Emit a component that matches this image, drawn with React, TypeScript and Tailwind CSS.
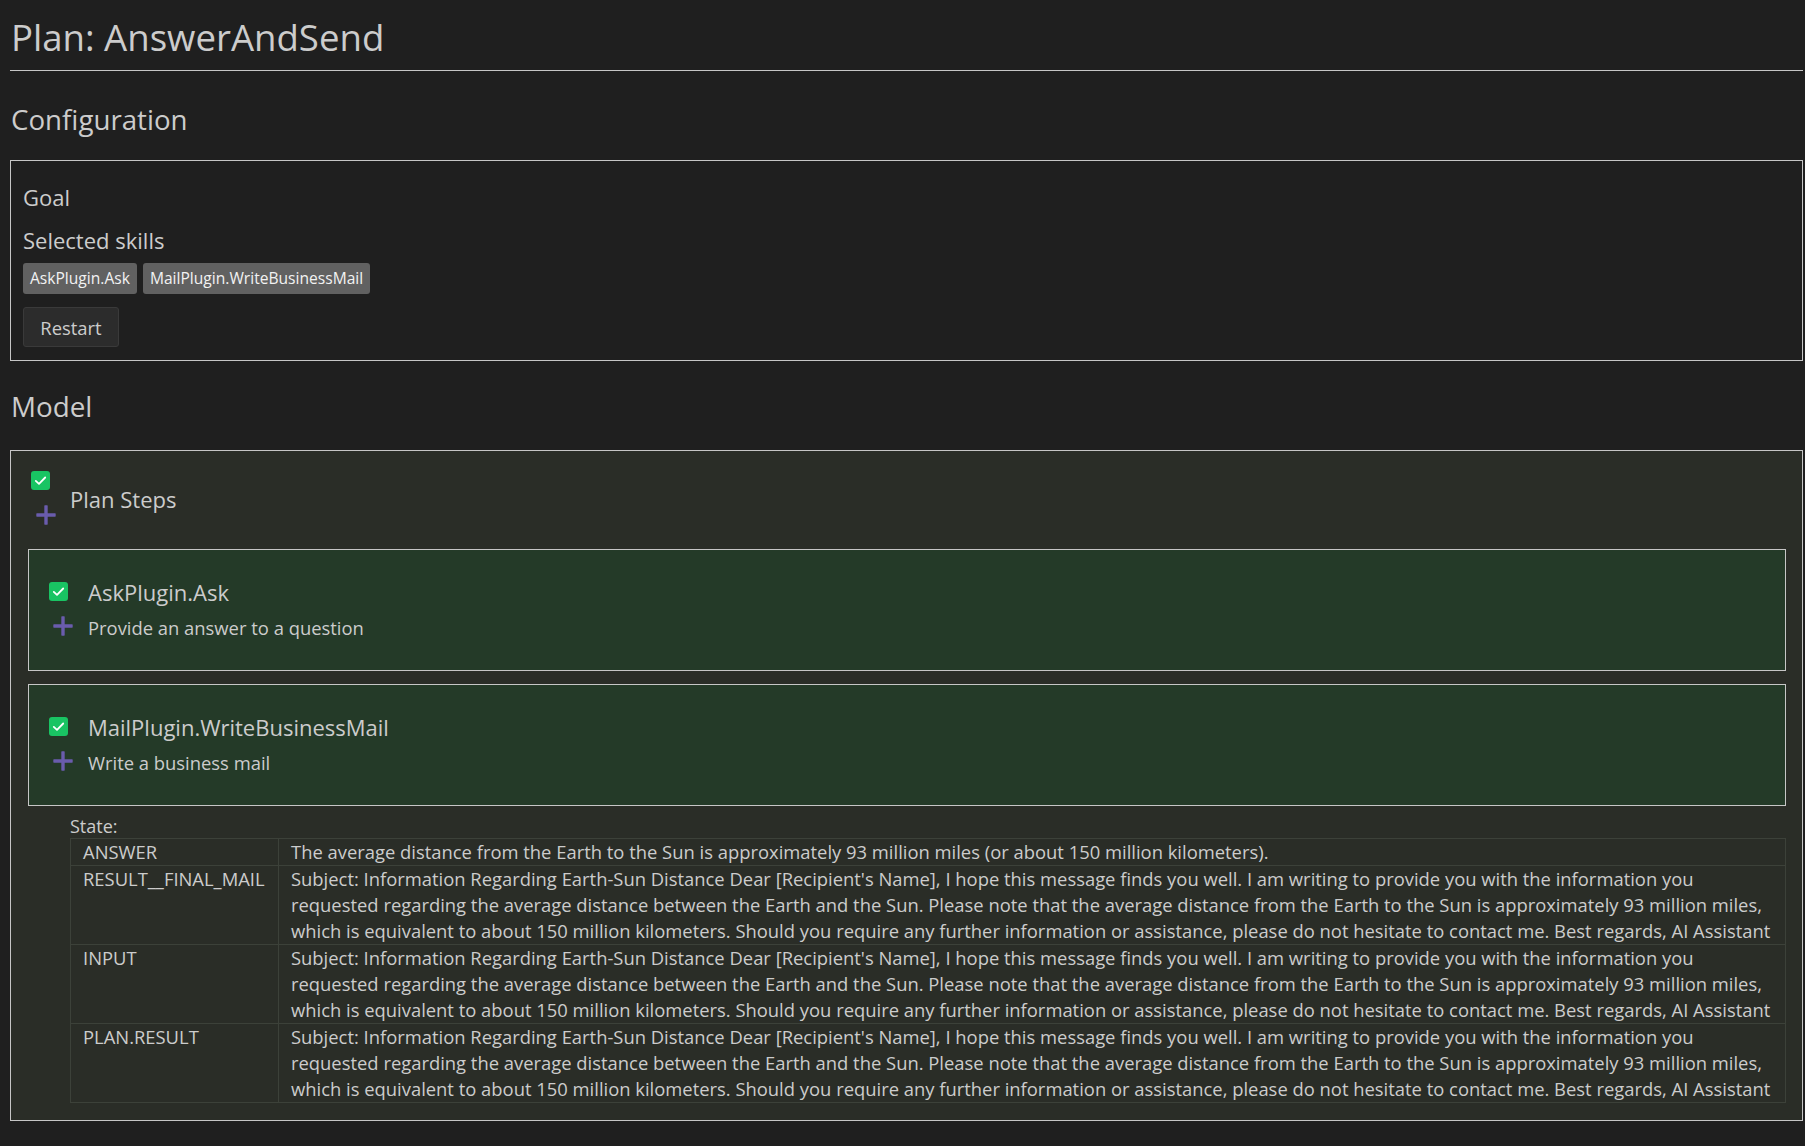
import React from "react";

const Check = () => (
  <svg width="19" height="19" viewBox="0 0 19 19" className="block shrink-0">
    <rect x="0" y="0" width="19" height="19" rx="3" fill="#19c463" />
    <path d="M4.8 9.9 L8 12.9 L14.2 6.5" stroke="#ffffff" strokeWidth="1.8" fill="none" strokeLinecap="round" strokeLinejoin="round" />
  </svg>
);

const Plus = () => (
  <svg width="20" height="20" viewBox="0 0 20 20" className="block shrink-0">
    <rect x="0.3" y="8.3" width="19.4" height="3.4" rx="0.6" fill="#6a5cad" />
    <rect x="8.3" y="0.3" width="3.4" height="19.4" rx="0.6" fill="#6a5cad" />
  </svg>
);

const Step = ({ name, desc }: { name: string; desc: string }) => (
  <div className="h-[122px] ml-[17px] mr-[16px] border border-[#c6c6c6] bg-[#243a28] pt-[29px] pl-[20px]">
    <div className="flex h-[26px] items-start">
      <div className="w-[39px] pt-[3px]">
        <Check />
      </div>
      <span className="text-[22px] leading-[26px] whitespace-nowrap">{name}</span>
    </div>
    <div className="flex mt-[11px] items-start">
      <div className="w-[39px] pl-[4px]">
        <Plus />
      </div>
      <span className="text-[18.4px] leading-[24px] whitespace-nowrap">{desc}</span>
    </div>
  </div>
);

const mailLines = [
  "Subject: Information Regarding Earth-Sun Distance Dear [Recipient's Name], I hope this message finds you well. I am writing to provide you with the information you ",
  "requested regarding the average distance between the Earth and the Sun. Please note that the average distance from the Earth to the Sun is approximately 93 million miles, ",
  "which is equivalent to about 150 million kilometers. Should you require any further information or assistance, please do not hesitate to contact me. Best regards, AI Assistant",
];

const rows: { key: string; lines: string[] }[] = [
  {
    key: "ANSWER",
    lines: [
      "The average distance from the Earth to the Sun is approximately 93 million miles (or about 150 million kilometers).",
    ],
  },
  { key: "RESULT__FINAL_MAIL", lines: mailLines },
  { key: "INPUT", lines: mailLines },
  { key: "PLAN.RESULT", lines: mailLines },
];

export default function App() {
  return (
    <div className="min-h-screen bg-[#1f1f1f] pl-[10px] pr-[2px] pb-[26px] text-[#cccccc] font-['Open_Sans',sans-serif] overflow-hidden">
      <h1 className="pt-[12.5px] pb-[9.5px] text-[36.6px] leading-[48px] border-b border-[#c6c6c6] pl-[1px]">
        Plan: AnswerAndSend
      </h1>

      <h2 className="mt-[30px] text-[27.7px] leading-[36px] pl-[1px]">Configuration</h2>

      <div className="mt-[23px] border border-[#c6c6c6] pl-[12px] pt-[22px] pb-[13px]">
        <div className="text-[22px] leading-[28px]">Goal</div>
        <div className="mt-[15px] text-[22px] leading-[28px]">Selected skills</div>
        <div className="mt-[9px] flex gap-[6px]">
          <span className="h-[31px] px-[7px] rounded-[3px] bg-[#616161] text-[#f2f2f2] text-[15.6px] flex items-center whitespace-nowrap">
            AskPlugin.Ask
          </span>
          <span className="h-[31px] px-[7px] rounded-[3px] bg-[#616161] text-[#f2f2f2] text-[15.6px] flex items-center whitespace-nowrap">
            MailPlugin.WriteBusinessMail
          </span>
        </div>
        <button className="mt-[13px] w-[96px] h-[40px] border border-[#3a3a3a] bg-[#2c2c2c] rounded-[3px] text-[18.4px] text-[#cccccc] flex items-center justify-center pt-[1px]">
          Restart
        </button>
      </div>

      <h2 className="mt-[27px] text-[27.8px] leading-[36px] pl-[1px]">Model</h2>

      <div className="mt-[26px] border border-[#c6c6c6] bg-[#2a2d27] pb-[17px]">
        <div className="h-[98px] pt-[20px] pl-[20px] flex items-start">
          <div className="w-[39px] flex flex-col">
            <Check />
            <div className="ml-[5px] mt-[15px]">
              <Plus />
            </div>
          </div>
          <div className="mt-[14px] text-[22px] leading-[28px]">Plan Steps</div>
        </div>

        <Step name="AskPlugin.Ask" desc="Provide an answer to a question" />
        <div className="h-[13px]" />
        <Step name="MailPlugin.WriteBusinessMail" desc="Write a business mail" />

        <div className="mt-[9px] ml-[59px] text-[18px] leading-[23px]">State:</div>
        <div className="ml-[59px] mr-[16px]">
          <table className="w-full border-collapse text-[18.4px] leading-[26px]">
            <tbody>
              {rows.map((r) => (
                <tr key={r.key}>
                  <td className="w-[208px] border border-[#3c4139] px-3 py-0 align-top whitespace-nowrap">
                    {r.key}
                  </td>
                  <td className="border border-[#3c4139] px-3 py-0 align-top">
                    {r.lines.map((l, i) => (
                      <div key={i} className="whitespace-nowrap">
                        {l}
                      </div>
                    ))}
                  </td>
                </tr>
              ))}
            </tbody>
          </table>
        </div>
      </div>
    </div>
  );
}
